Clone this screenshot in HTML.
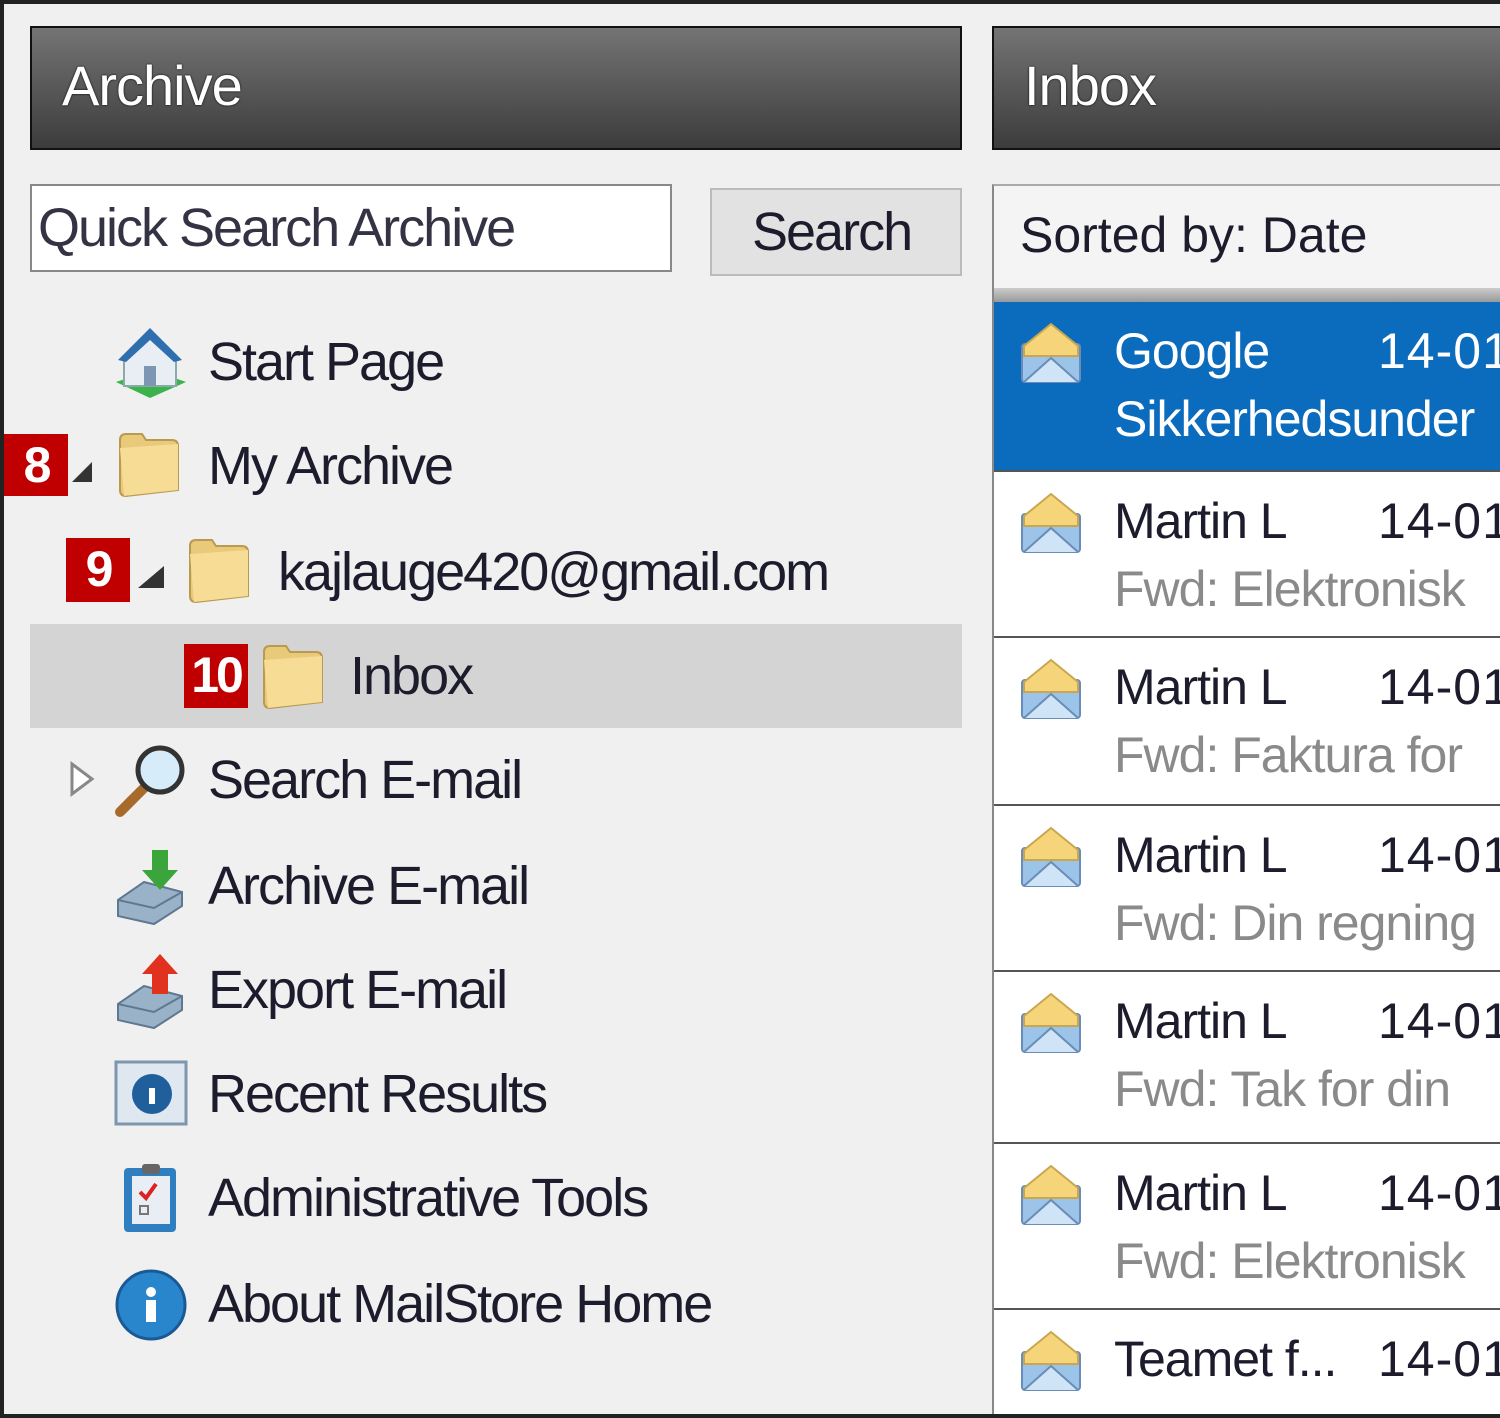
<!DOCTYPE html>
<html><head><meta charset="utf-8"><style>
*{margin:0;padding:0;box-sizing:border-box}
html,body{width:1500px;height:1418px;overflow:hidden}
body{background:#f0f0f0;font-family:"Liberation Sans",sans-serif;position:relative;color:#1c1c2c}
.frame{position:absolute;left:0;top:0;width:1500px;height:1418px;border:4px solid #222;border-right:none}
.hdr{position:absolute;top:26px;height:124px;background:linear-gradient(#747474,#3c3c3c);border:2px solid #111;color:#fff;font-size:56px;letter-spacing:-1px;padding-left:30px;line-height:116px;text-shadow:0 0 2px #000}
.t{position:absolute;font-size:54px;letter-spacing:-2px;line-height:60px;white-space:nowrap}
.badge{position:absolute;background:#c00000;color:#fff;font-weight:bold;font-size:50px;text-align:center;line-height:62px;letter-spacing:-3px}
.row{position:absolute;left:994px;width:506px;border-bottom:2px solid #555;background:#fff;overflow:hidden}
.row .n{position:absolute;left:120px;top:20px;font-size:50px;letter-spacing:-1px;white-space:nowrap}
.row .d{position:absolute;left:384px;top:20px;font-size:50px;letter-spacing:1px;white-space:nowrap}
.row .s{position:absolute;left:120px;top:88px;font-size:50px;color:#8a8a8a;letter-spacing:-1px;white-space:nowrap}
.row svg{position:absolute;left:26px;top:20px}
.sel{background:#0b6cbe;color:#fff}
.sel .s{color:#fff}
</style></head><body>
<div class="frame"></div>
<div class="hdr" style="left:30px;width:932px">Archive</div>
<div class="hdr" style="left:992px;width:520px">Inbox</div>

<div style="position:absolute;left:30px;top:184px;width:642px;height:88px;background:#fff;border:2px solid #888;"></div>
<div class="t" style="left:38px;top:198px;color:#334;font-size:54px">Quick Search Archive</div>
<div style="position:absolute;left:710px;top:188px;width:252px;height:88px;background:#e2e2e2;border:2px solid #bbb;"></div>
<div class="t" style="left:752px;top:202px">Search</div>

<!-- inbox panel -->
<div style="position:absolute;left:992px;top:184px;width:520px;height:1230px;border-left:2px solid #888;border-top:2px solid #aaa;background:#fff"></div>
<div style="position:absolute;left:994px;top:186px;width:506px;height:102px;background:#f4f4f4"></div>
<div class="t" style="left:1020px;top:205px;font-size:50px;letter-spacing:0">Sorted by: Date</div>
<div style="position:absolute;left:994px;top:288px;width:506px;height:14px;background:linear-gradient(#ccc,#999)"></div>

<svg width="0" height="0" style="position:absolute"><defs>
<g id="env"><rect x="2" y="22" width="58" height="38" rx="3" fill="#9cc4e8" stroke="#6a8cb8" stroke-width="2"/><path d="M4 24 L31 2 L58 24 L58 34 L4 34Z" fill="#f6d57a" stroke="#c9a650" stroke-width="2"/><path d="M4 60 L31 36 L58 60" fill="#cfe4f6" stroke="#6a8cb8" stroke-width="2"/></g>
<g id="fold"><path d="M4 10 Q4 4 10 4 L26 4 L30 10 L56 10 Q62 10 62 16 L62 60 L10 66 Q4 66 4 60Z" fill="#e9c97a" stroke="#b89a50" stroke-width="2"/><path d="M4 18 L62 14 L62 60 L8 66Z" fill="#f7dc95"/></g>
</defs></svg>

<div class="row sel" style="top:302px;height:170px"><svg width="64" height="64"><use href="#env"/></svg><div class="n">Google</div><div class="d">14-01</div><div class="s" style="color:#fff">Sikkerhedsunder</div></div>
<div class="row" style="top:472px;height:166px"><svg width="64" height="64"><use href="#env"/></svg><div class="n">Martin L</div><div class="d">14-01</div><div class="s">Fwd: Elektronisk</div></div>
<div class="row" style="top:638px;height:168px"><svg width="64" height="64"><use href="#env"/></svg><div class="n">Martin L</div><div class="d">14-01</div><div class="s">Fwd: Faktura for</div></div>
<div class="row" style="top:806px;height:166px"><svg width="64" height="64"><use href="#env"/></svg><div class="n">Martin L</div><div class="d">14-01</div><div class="s">Fwd: Din regning</div></div>
<div class="row" style="top:972px;height:172px"><svg width="64" height="64"><use href="#env"/></svg><div class="n">Martin L</div><div class="d">14-01</div><div class="s">Fwd: Tak for din</div></div>
<div class="row" style="top:1144px;height:166px"><svg width="64" height="64"><use href="#env"/></svg><div class="n">Martin L</div><div class="d">14-01</div><div class="s">Fwd: Elektronisk</div></div>
<div class="row" style="top:1310px;height:104px;border:none"><svg width="64" height="64"><use href="#env"/></svg><div class="n">Teamet f...</div><div class="d">14-01</div></div>

<!-- tree -->
<div style="position:absolute;left:30px;top:624px;width:932px;height:104px;background:#d4d4d4"></div>

<svg style="position:absolute;left:112px;top:326px" width="76" height="74"><path d="M4 56 L38 72 L74 56 L40 44Z" fill="#3bb34a"/><path d="M12 30 L38 6 L64 30 L64 60 L12 60Z" fill="#e8eef4" stroke="#8aa" stroke-width="2"/><path d="M6 34 L38 2 L70 34 L62 36 L38 14 L14 36Z" fill="#2f6fae"/><rect x="32" y="40" width="12" height="20" fill="#7d96b4"/></svg>
<div class="t" style="left:208px;top:332px">Start Page</div>

<div class="badge" style="left:4px;top:434px;width:64px;height:62px">8</div>
<svg style="position:absolute;left:70px;top:460px" width="24" height="24"><path d="M22 2 L22 22 L2 22Z" fill="#333"/></svg>
<svg style="position:absolute;left:116px;top:430px" width="68" height="70"><use href="#fold"/></svg>
<div class="t" style="left:208px;top:436px">My Archive</div>

<div class="badge" style="left:66px;top:538px;width:64px;height:64px">9</div>
<svg style="position:absolute;left:134px;top:562px" width="34" height="30"><path d="M30 4 L30 26 L4 26Z" fill="#333"/></svg>
<svg style="position:absolute;left:186px;top:536px" width="68" height="70"><use href="#fold"/></svg>
<div class="t" style="left:278px;top:542px">kajlauge420@gmail.com</div>

<div class="badge" style="left:184px;top:644px;width:64px;height:64px">10</div>
<svg style="position:absolute;left:260px;top:642px" width="68" height="70"><use href="#fold"/></svg>
<div class="t" style="left:350px;top:646px">Inbox</div>

<svg style="position:absolute;left:68px;top:760px" width="28" height="38"><path d="M4 4 L24 19 L4 34Z" fill="#fff" stroke="#888" stroke-width="3"/></svg>
<svg style="position:absolute;left:112px;top:742px" width="76" height="78"><path d="M34 44 L8 70" stroke="#a86a2a" stroke-width="10" stroke-linecap="round"/><circle cx="48" cy="28" r="22" fill="#d6ecfa" stroke="#333" stroke-width="5"/></svg>
<div class="t" style="left:208px;top:750px">Search E-mail</div>

<svg style="position:absolute;left:114px;top:846px" width="72" height="80"><path d="M4 54 L30 36 L68 46 L68 60 L40 78 L4 70Z" fill="#9ab2c8" stroke="#5d7890" stroke-width="2"/><path d="M4 54 L40 62 L68 46" fill="none" stroke="#5d7890" stroke-width="2"/><path d="M38 4 L54 4 L54 24 L64 24 L46 44 L28 24 L38 24Z" fill="#3aa53a"/></svg>
<div class="t" style="left:208px;top:856px">Archive E-mail</div>

<svg style="position:absolute;left:114px;top:950px" width="72" height="80"><path d="M4 54 L30 36 L68 46 L68 60 L40 78 L4 70Z" fill="#9ab2c8" stroke="#5d7890" stroke-width="2"/><path d="M4 54 L40 62 L68 46" fill="none" stroke="#5d7890" stroke-width="2"/><path d="M46 4 L64 24 L54 24 L54 44 L38 44 L38 24 L28 24Z" fill="#e0321e"/></svg>
<div class="t" style="left:208px;top:960px">Export E-mail</div>

<svg style="position:absolute;left:114px;top:1060px" width="74" height="68"><rect x="2" y="2" width="70" height="62" fill="#dfe8f0" stroke="#7d96ad" stroke-width="3"/><circle cx="38" cy="34" r="20" fill="#1f5f9c"/><rect x="35" y="28" width="6" height="16" fill="#fff"/></svg>
<div class="t" style="left:208px;top:1064px">Recent Results</div>

<svg style="position:absolute;left:120px;top:1160px" width="62" height="76"><rect x="4" y="8" width="52" height="64" rx="4" fill="#2f7fc0"/><rect x="12" y="16" width="38" height="48" fill="#e8eef4"/><rect x="22" y="4" width="18" height="10" rx="3" fill="#666"/><path d="M20 32 L26 38 L36 24" stroke="#d22" stroke-width="4" fill="none"/><rect x="20" y="46" width="8" height="8" fill="none" stroke="#777" stroke-width="2"/></svg>
<div class="t" style="left:208px;top:1168px">Administrative Tools</div>

<svg style="position:absolute;left:114px;top:1268px" width="74" height="74"><circle cx="37" cy="37" r="34" fill="#2a86cc" stroke="#1a5a94" stroke-width="3"/><rect x="32" y="32" width="10" height="22" fill="#fff"/><circle cx="37" cy="24" r="5" fill="#fff"/></svg>
<div class="t" style="left:208px;top:1274px">About MailStore Home</div>
</body></html>
